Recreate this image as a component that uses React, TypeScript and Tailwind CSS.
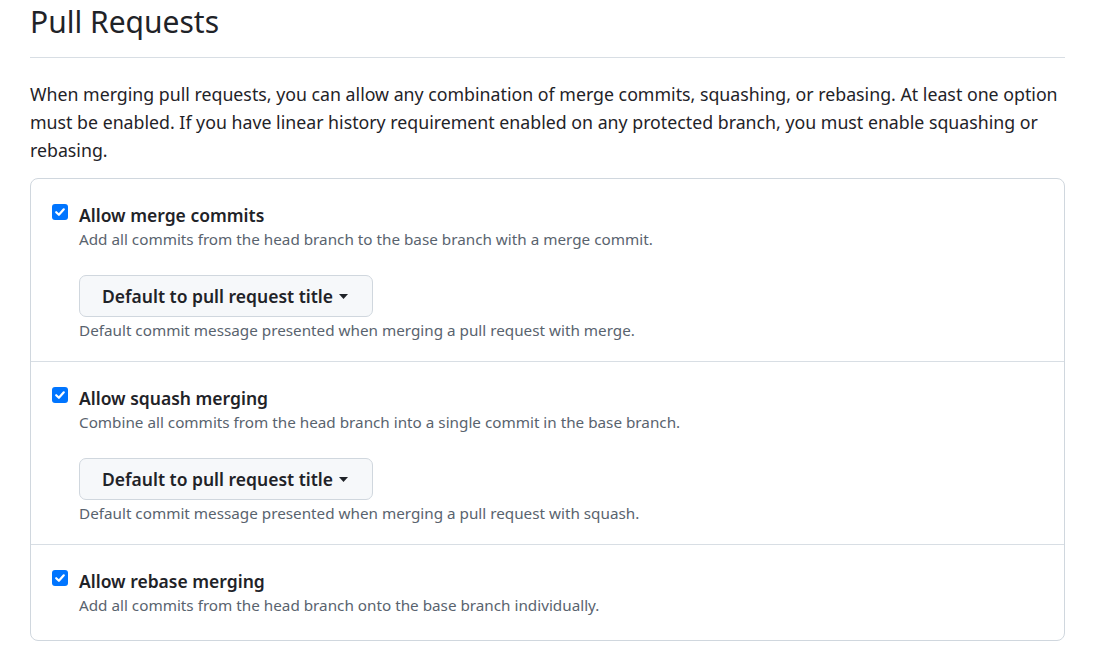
import React from "react";

const font = { fontFamily: '"Noto Sans", "Open Sans", Arial, sans-serif' };

function Check() {
  return (
    <span className="mt-[2px] flex h-[16px] w-[16px] shrink-0 items-center justify-center rounded-[3px] bg-[#0075ff]">
      <svg width="12" height="12" viewBox="0 0 12 12" fill="none">
        <path d="M2.2 6.2 L4.9 8.8 L9.8 3.3" stroke="white" strokeWidth="2.2" strokeLinecap="round" strokeLinejoin="round" />
      </svg>
    </span>
  );
}

function Section({
  title,
  desc,
  help,
  last,
}: {
  title: string;
  desc: string;
  help?: string;
  last?: boolean;
}) {
  return (
    <div className={`px-[21px] pt-[23px] ${last ? "pb-[24px]" : "pb-[20px] border-b border-[#d8dee4]"}`}>
      <div className="flex items-start gap-[11px]">
        <Check />
        <div className="flex flex-col">
          <div className="text-[17.5px] font-semibold leading-[26px] text-[#1f2328]">{title}</div>
          <div className="text-[15.25px] leading-[22px] text-[#59636e]">{desc}</div>
          {help && (
            <>
              <div className="mt-[25px]">
                <button className="flex h-[42px] items-center gap-[6px] rounded-[7px] border border-[#d0d7de] bg-[#f6f8fa] pl-[22px] pr-[24px] text-[17.5px] font-semibold text-[#1f2328]">
                  Default to pull request title
                  <svg width="9" height="5" viewBox="0 0 9 5">
                    <path d="M0 0 L9 0 L4.5 5 Z" fill="#1f2328" />
                  </svg>
                </button>
              </div>
              <div className="mt-[2px] text-[15.25px] leading-[22px] text-[#59636e]">{help}</div>
            </>
          )}
        </div>
      </div>
    </div>
  );
}

export default function App() {
  return (
    <div className="min-h-[651px] bg-white px-[30px]" style={font}>
      <div className="w-[1035px]">
        <h2 className="border-b border-[#d8dee4] pt-[3px] pb-[16px] text-[30px] font-normal leading-[38px] text-[#1f2328]">
          Pull Requests
        </h2>
        <p className="mt-[22px] text-[17.75px] leading-[28px] text-[#1f2328]">
          When merging pull requests, you can allow any combination of merge commits, squashing, or rebasing. At least one
          option must be enabled. If you have linear history requirement enabled on any protected branch, you must enable
          squashing or rebasing.
        </p>
        <div className="mt-[14px] rounded-[8px] border border-[#d0d7de]">
          <Section
            title="Allow merge commits"
            desc="Add all commits from the head branch to the base branch with a merge commit."
            help="Default commit message presented when merging a pull request with merge."
          />
          <Section
            title="Allow squash merging"
            desc="Combine all commits from the head branch into a single commit in the base branch."
            help="Default commit message presented when merging a pull request with squash."
          />
          <Section
            title="Allow rebase merging"
            desc="Add all commits from the head branch onto the base branch individually."
            last
          />
        </div>
      </div>
    </div>
  );
}
